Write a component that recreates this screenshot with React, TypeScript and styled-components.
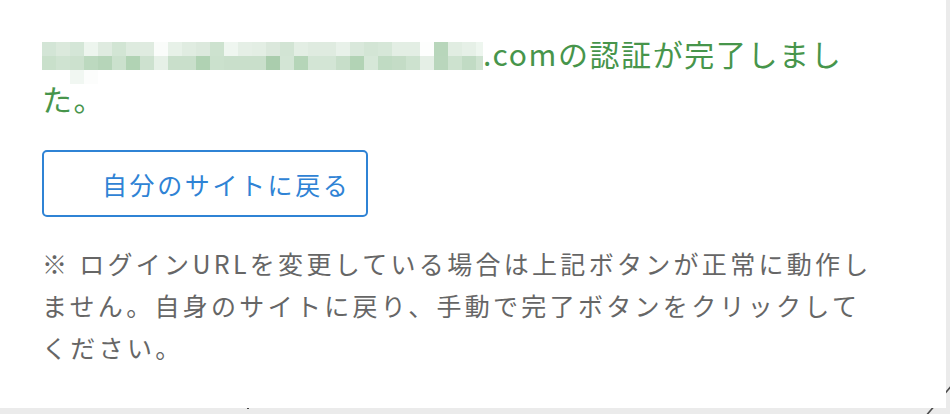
import { FC } from 'react';
import styled, { createGlobalStyle } from 'styled-components';

const GlobalStyle = createGlobalStyle`
  html, body {
    margin: 0;
    padding: 0;
    background-color: #ebebeb;
  }

  body {
    font-family: 'Noto Sans CJK JP', 'Noto Sans', sans-serif;
  }
`;

// pixelated (censored) domain name, two rows plus a few stray cells
const MOSAIC_ROWS: string[][] = [
  [
    '#d3e5d6', '#dbe9dc', '#d4e6d7', '#edf5ee', '#dfebe0', '#d2e5d4', '#deebdf', '#dfebe0',
    '#fafcfa', '#e7f1e8', '#e0ece1', '#dce9dd', '#cde2cf', '#eff6f0', '#e5efe6', '#e3eee4',
    '#dbe8dc', '#d2e4d4', '#e3eee4', '#dfebe0', '#dfebe0', '#e8f1e9', '#d9e8db', '#d3e5d5',
    '#d6e7d8', '#e3eee4', '#e3eee4', '#fdfefd', '#b8d6bb', '#e1ede2', '#e6f0e7', '#eef6ef',
  ],
  [
    '#c9e0cb', '#cfe3d1', '#cce1ce', '#bcd9bf', '#b6d5b9', '#cbe1cd', '#b1d3b4', '#cde1cf',
    '#e6f0e7', '#c9dfcb', '#c9dfcb', '#b0d2b3', '#cbe1cd', '#c9dfcb', '#c9dfcb', '#c9dfcb',
    '#aacdad', '#d3e5d5', '#b5d5b8', '#d3e5d5', '#d3e5d5', '#c7dec9', '#b2d3b5', '#d6e7d8',
    '#c0dbc3', '#c4dcc6', '#cde2cf', '#e5efe6', '#b9d6bc', '#cde2cf', '#c1dbc4', '#cfe3d1',
  ],
  [
    'transparent', 'transparent', '#f1f7f2', '#fcfdfc',
  ],
];

const Mosaic: FC = () => (
  <MosaicGrid aria-hidden>
    {MOSAIC_ROWS.map((row, r) =>
      row.map((color, c) => <MosaicCell key={`${r}-${c}`} $color={color} style={{ gridRow: r + 1, gridColumn: c + 1 }} />),
    )}
  </MosaicGrid>
);

const App: FC = () => {
  return (
    <>
      <GlobalStyle />
      <Page>
        <Backdrop width='950' height='414' viewBox='0 0 950 414'>
          <line x1='925' y1='417' x2='953' y2='384' stroke='#4b4b4b' strokeWidth='1.6' />
          <rect x='247' y='407.5' width='2' height='1.5' fill='#444' />
        </Backdrop>
        <Card>
          <SuccessMessage>
            <Mosaic />
            .comの認証が完了しました。
          </SuccessMessage>
          <BackButton type='button'>自分のサイトに戻る</BackButton>
          <Notice>
            ※ ログインURLを変更している場合は上記ボタンが正常に動作しません。自身のサイトに戻り、手動で完了ボタンをクリックしてください。
          </Notice>
        </Card>
      </Page>
    </>
  );
};

export default App;

const Page = styled.div`
  position: relative;
  width: 950px;
  height: 414px;
  overflow: hidden;
`;

const Backdrop = styled.svg`
  position: absolute;
  left: 0;
  top: 0;
  z-index: 0;
`;

const Card = styled.div`
  position: relative;
  z-index: 1;
  width: 946px;
  height: 408px;
  box-sizing: border-box;
  padding: 31px 0 0 42px;
  background-color: #ffffff;
  display: flex;
  flex-direction: column;
  align-items: flex-start;
`;

const SuccessMessage = styled.p`
  width: 820px;
  margin: 0;
  font-size: 30px;
  line-height: 45px;
  letter-spacing: 1.6px;
  color: #47954b;
`;

const MosaicGrid = styled.span`
  display: inline-grid;
  grid-template-columns: repeat(31, 14px) 7px;
  grid-template-rows: repeat(3, 14px);
  width: 441px;
  height: 42px;
  vertical-align: top;
  margin: 11px 0 -8px;
`;

const MosaicCell = styled.span<{ $color: string }>`
  display: block;
  background-color: ${({ $color }) => $color};
`;

const BackButton = styled.button`
  display: flex;
  align-items: center;
  width: 326px;
  height: 67px;
  margin-top: 29px;
  padding: 0 0 0 58px;
  box-sizing: border-box;
  background-color: #ffffff;
  border: 2px solid #2f83d5;
  border-radius: 5px;
  font-family: inherit;
  font-size: 25px;
  letter-spacing: 2.6px;
  color: #2f83d5;
  cursor: pointer;
`;

const Notice = styled.p`
  width: 842px;
  margin: 25px 0 0;
  font-size: 25px;
  line-height: 42px;
  letter-spacing: 3.3px;
  color: #666666;
`;
